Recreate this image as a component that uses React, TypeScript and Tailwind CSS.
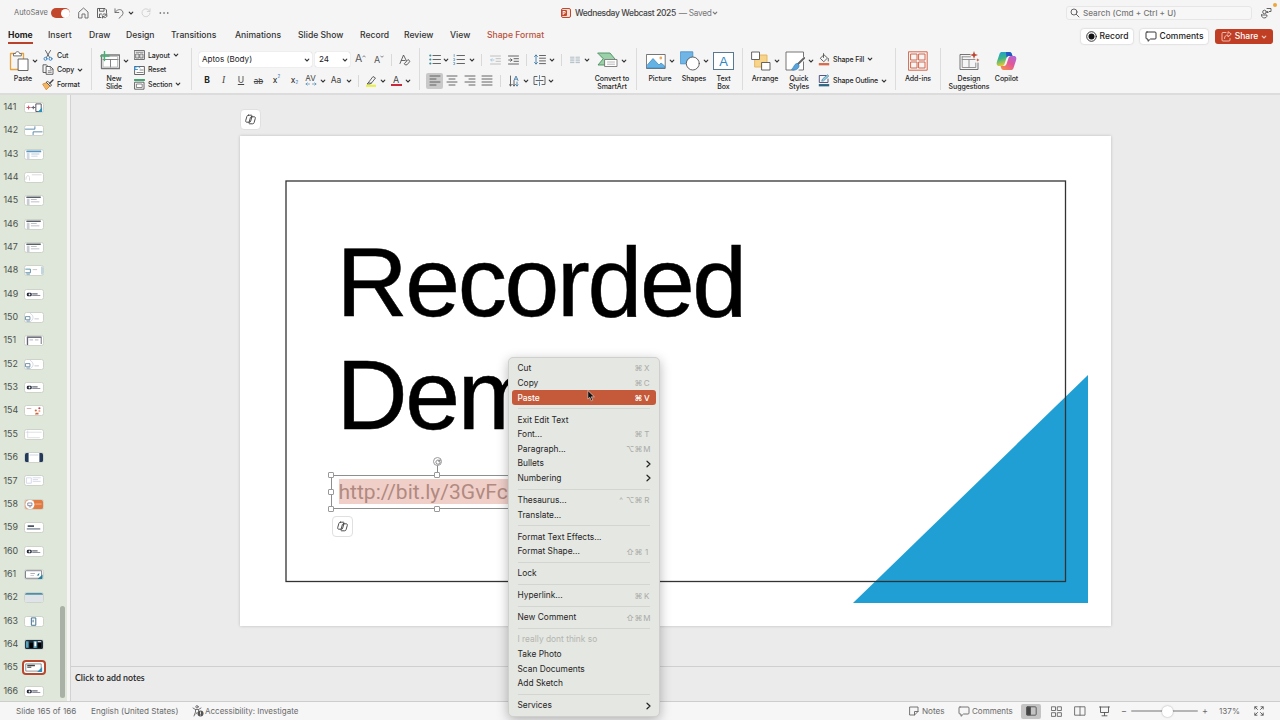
import React, { type ReactNode } from "react";

type Kids = { children?: ReactNode };

function Svg({ w, h, vb, children }: Kids & { w: number; h: number; vb?: string }) {
  return (
    <svg
      width={w}
      height={h}
      viewBox={vb ?? `0 0 ${w} ${h}`}
      fill="none"
      stroke="#555"
      strokeWidth={0.9}
      strokeLinecap="round"
      strokeLinejoin="round"
      className="block shrink-0"
    >
      {children}
    </svg>
  );
}

function Chev({ color = "#333" }: { color?: string }) {
  return (
    <Svg w={6} h={6}>
      <path d="M1.2 2.2L3 4L4.8 2.2" stroke={color} strokeWidth={1.1} />
    </Svg>
  );
}

function Cell({ w, children }: Kids & { w: string }) {
  return <div className={`flex shrink-0 items-center justify-center ${w}`}>{children}</div>;
}

function VLine() {
  return <div className="h-[12px] w-px bg-[#d9d9d9]" />;
}

function GroupLine() {
  return <div className="mt-[2px] h-[42px] w-px shrink-0 bg-[#dcdcdc]" />;
}

function Big({ w, icon, lines, chev }: { w: string; icon: ReactNode; lines: string[]; chev?: boolean }) {
  return (
    <div className={`flex shrink-0 flex-col items-center pt-[5px] ${w}`}>
      <div className="flex h-[20px] items-center gap-[3px]">
        {icon}
        {chev && <Chev />}
      </div>
      <div className="mt-[3.500px] text-center text-[7px] leading-[8px] font-medium tracking-[-0.01em] whitespace-nowrap text-[#262626]">
        {lines.map((l) => (
          <div key={l}>{l}</div>
        ))}
      </div>
    </div>
  );
}

function Small({ icon, label, chev }: { icon: ReactNode; label: string; chev?: boolean }) {
  return (
    <div className="flex h-[14.6px] items-center">
      <div className="flex w-[12px] justify-center">{icon}</div>
      <span className="ml-[3px] text-[7px] leading-none font-medium tracking-[-0.02em] whitespace-nowrap text-[#262626]">{label}</span>
      {chev && (
        <span className="ml-[3px]">
          <Chev />
        </span>
      )}
    </div>
  );
}

/* ---------- ribbon icons ---------- */

const PasteIcon = () => (
  <Svg w={20} h={20}>
    <path d="M6 2.5H1.5V18.500H9" stroke="#e8a33d" strokeWidth={1.3} />
    <path d="M12 2.5H14.500V8" stroke="#e8a33d" strokeWidth={1.3} />
    <path d="M4.500 4.500V2.500H6.500C6.500 0 10.500 0 10.500 2.500H12.300V4.500Z" fill="#fff" strokeWidth={0.8} />
    <rect x="9.500" y="8" width="9.500" height="11.500" fill="#fff" stroke="#555" />
  </Svg>
);
const CutIcon = () => (
  <Svg w={10} h={11}>
    <path d="M2.500 0.500L6.600 7.500M7.500 0.500L3.400 7.500" strokeWidth={0.9} />
    <circle cx="2.500" cy="8.800" r="1.500" stroke="#2f7fc0" />
    <circle cx="7.500" cy="8.800" r="1.500" stroke="#2f7fc0" />
  </Svg>
);
const CopyIcon = () => (
  <Svg w={12} h={11}>
    <path d="M4 8.500H1V0.800H4.500L5.500 2" />
    <path d="M4.500 2.500H8.500L11 5V10.300H4.500Z" fill="#fff" />
    <path d="M8.300 2.700V5.200H10.800M6.200 6.800H9.300M6.200 8.400H9.300" strokeWidth={0.7} />
  </Svg>
);
const FormatIcon = () => (
  <Svg w={12} h={11}>
    <path d="M1 5L5 3.500L8 7L4.500 10.500Z" fill="#f3b562" stroke="#d98b2b" />
    <path d="M4.500 3.500L8.500 7.300L9.500 6L6 2.500Z" fill="#fff" stroke="#444" />
    <path d="M7.800 4.200L11 1" stroke="#444" strokeWidth={1.400} />
  </Svg>
);
const NewSlideIcon = () => (
  <Svg w={20} h={20}>
    <rect x="1.500" y="4" width="18" height="13.500" fill="#fff" stroke="#777" strokeWidth={1.300} />
    <path d="M3 8.500H18M10.500 8.500V16" stroke="#777" />
    <rect x="3.500" y="5.500" width="14" height="10.500" stroke="#999" strokeWidth={0.600} />
    <path d="M4.500 0.500V9.500M0.500 5H9" stroke="#43b373" strokeWidth={1.400} />
  </Svg>
);
const LayoutIcon = () => (
  <Svg w={11} h={10}>
    <rect x="0.600" y="0.600" width="9.800" height="8.800" fill="#fff" />
    <path d="M2 2.300H9M2 4H5V8H2ZM6.200 4H9V8H6.200Z" strokeWidth={0.7} fill="#ddd" />
  </Svg>
);
const ResetIcon = () => (
  <Svg w={11} h={10}>
    <rect x="1" y="1.500" width="9.400" height="8" fill="#fff" />
    <path d="M3 7.500H9M6 5H9" strokeWidth={0.700} />
    <path d="M0.500 1.500V4.500H3.500M0.700 4.200C1.500 1 5 0.800 6 3" stroke="#2f8fd0" />
  </Svg>
);
const SectionIcon = () => (
  <Svg w={11} h={11}>
    <path d="M0.600 1H10.400" stroke="#43a373" strokeWidth={1.800} />
    <rect x="1" y="3.200" width="9" height="7" fill="#fff" />
    <rect x="2.800" y="5" width="5.400" height="3.500" strokeWidth={0.700} />
  </Svg>
);
function Lines({ xs, color = "#555" }: { xs: [number, number][]; color?: string }) {
  return (
    <Svg w={12} h={11}>
      {xs.map(([a, b], i) => (
        <path key={i} d={`M${a} ${1 + i * 3}H${b}`} stroke={color} />
      ))}
    </Svg>
  );
}
const BulletsIcon = ({ num }: { num?: boolean }) => (
  <Svg w={12} h={11}>
    <path d="M4 1.500H11.500M4 5.500H11.500M4 9.500H11.500" />
    {num ? (
      <path d="M1.200 0.500V2.500M0.700 4.600H1.700V5.500L0.700 6.500H1.700M0.700 8.500H1.700V10.500H0.700" stroke="#4a8bb5" strokeWidth={0.700} />
    ) : (
      <path d="M1.200 1.500H1.400M1.200 5.500H1.400M1.200 9.500H1.400" stroke="#3a8f9d" strokeWidth={2} />
    )}
  </Svg>
);
const IndentIcon = ({ dim }: { dim?: boolean }) => (
  <Svg w={11} h={10}>
    <path d="M0.500 1H10.500M6 3.700H10.500M6 6.300H10.500M0.500 9H10.500" stroke={dim ? "#bbb" : "#555"} />
    {dim ? <path d="M4 5H0.700M2 3.700L0.700 5L2 6.300" stroke="#a9c6dc" /> : <path d="M0.700 5H4M2.700 3.700L4 5L2.700 6.300" />}
  </Svg>
);
const SpacingIcon = () => (
  <Svg w={12} h={11}>
    <path d="M5.500 1.500H11.500M5.500 4.200H11.500M5.500 6.900H11.500M5.500 9.600H11.500" />
    <path d="M2 1V10M0.500 2.500L2 1L3.500 2.500M0.500 8.500L2 10L3.500 8.500" stroke="#3b78a8" />
  </Svg>
);
const ColumnsIcon = () => (
  <Svg w={10} h={8}>
    <path d="M0.500 1.200H4M0.500 3H4M0.500 4.800H4M0.500 6.600H4M6 1.200H9.500M6 3H9.500M6 4.800H9.500M6 6.600H9.500" stroke="#a8b8c2" />
  </Svg>
);
const DirectionIcon = () => (
  <Svg w={11} h={12}>
    <path d="M1.500 1V11M0.300 9.500L1.500 11L2.700 9.500M5 6V11M3.800 9.500L5 11L6.200 9.500" />
    <path d="M5 5.500L7 1L9 5.500M5.700 4.200H8.300M8 7V11M6.900 9.800L8 11L9.100 9.800" stroke="#4a7fa8" />
  </Svg>
);
const AlignTextIcon = () => (
  <Svg w={13} h={11}>
    <path d="M4 1.500H1V9.500H4M9 1.500H12V9.500H9M3 5.500H10" />
    <path d="M6.500 0.500V4M6.500 7V10.500" stroke="#4a7fa8" />
  </Svg>
);
const SmartArtIcon = () => (
  <Svg w={21} h={18}>
    <path d="M1 1H13L18 7L13 13H1L6 7Z" fill="#9ad1a9" stroke="#4c8f60" />
    <rect x="8" y="7.500" width="12" height="7" fill="#fff" stroke="#777" />
    <path d="M10.500 10H17.500M10.500 12.200H17.500" stroke="#999" strokeWidth={0.700} />
  </Svg>
);
const PictureIcon = () => (
  <Svg w={20} h={17}>
    <rect x="0.800" y="1.500" width="18.400" height="14" fill="#fff" stroke="#666" />
    <path d="M1.300 12L7 5.500L13 12L15 10L18.700 13V15H1.300Z" fill="#64b1e4" stroke="#3b82b8" strokeWidth={0.700} />
    <circle cx="14.800" cy="5" r="1.400" fill="#f0a95c" stroke="none" />
  </Svg>
);
const ShapesIcon = () => (
  <Svg w={20} h={20}>
    <rect x="0.800" y="0.800" width="12" height="12" fill="#6fb5e6" stroke="#4a93c8" />
    <circle cx="12.800" cy="12.500" r="6.500" fill="#fff" stroke="#555" />
  </Svg>
);
const TextBoxIcon = () => (
  <div className="flex h-[18px] w-[21px] items-center justify-center border border-[#557a92] bg-white font-['Liberation_Sans'] text-[13px] leading-none text-[#2f86c4]">
    A
  </div>
);
const ArrangeIcon = () => (
  <Svg w={20} h={20}>
    <rect x="4" y="4" width="12" height="12" fill="#f8d38a" stroke="#e3b25a" />
    <rect x="1" y="1" width="7.500" height="7.500" fill="#fff" />
    <rect x="11" y="11.500" width="8" height="7.500" fill="#fff" />
  </Svg>
);
const QuickIcon = () => (
  <Svg w={20} h={20}>
    <path d="M9 19H1V1H18.500V19H14" fill="#fff" stroke="#666" />
    <path d="M19 7.500L12.500 14" stroke="#fff" strokeWidth={3.500} />
    <path d="M19.200 7L12.500 13.500" stroke="#666" strokeWidth={2} />
    <path d="M12.500 12.500C9.500 12 9.500 15.500 6.500 18.500C10 20 14.500 18 14 14.500Z" fill="#58a3db" stroke="#3a7fb5" strokeWidth={0.700} />
  </Svg>
);
const FillIcon = () => (
  <Svg w={12} h={13}>
    <path d="M2.500 5L6 1.800L9.500 5L6 8.500ZM5.500 0.600V4.500M10.300 5.500V8" />
    <path d="M0.800 11.200H11.200" stroke="#d9694a" strokeWidth={2.300} strokeLinecap="butt" />
  </Svg>
);
const OutlineIcon = () => (
  <Svg w={12} h={13}>
    <path d="M8 1.500H1.300V8.500H10V5" stroke="#447" />
    <path d="M3.800 6.800L4.500 5L9.500 0.800L10.800 2L6 6.500Z" fill="#9cd" stroke="#3a7fa5" strokeWidth={0.700} />
    <path d="M0.800 11.200H11.200" stroke="#2d6580" strokeWidth={2.300} strokeLinecap="butt" />
  </Svg>
);
const AddInsIcon = () => (
  <Svg w={20} h={20}>
    <rect x="0.800" y="0.800" width="18.400" height="18.400" stroke="#d4674c" strokeWidth={1} />
    <path d="M3 3H9V9H3ZM11 3H17V9H11ZM3 11H9V17H3ZM11 11H17V17H11Z" stroke="#d4674c" strokeWidth={1} />
  </Svg>
);
const DesignIcon = () => (
  <Svg w={21} h={20}>
    <path d="M11 3.500H1V18.500H19V12" stroke="#666" />
    <path d="M3.200 5.800H11.500M3.200 8.500H16M10 8.500V16.500M3.200 5.800V16.500H16.800V12" stroke="#888" />
    <path d="M15 0L16 3L19 4L16 5L15 8L14 5L11 4L14 3ZM18.800 7.300L19.300 8.500L20.500 9L19.300 9.500L18.800 10.700L18.300 9.500L17.100 9L18.300 8.500Z" fill="#bd4430" stroke="none" />
  </Svg>
);
const CopilotIcon = () => (
  <Svg w={21} h={20} vb="0 0 21 20">
    <defs>
      <linearGradient id="cpA" x1="0" y1="0" x2="0.300" y2="1">
        <stop offset="0" stopColor="#1d9bd8" />
        <stop offset="0.500" stopColor="#3ab58a" />
        <stop offset="1" stopColor="#e8c930" />
      </linearGradient>
      <linearGradient id="cpB" x1="1" y1="0" x2="0.200" y2="1">
        <stop offset="0" stopColor="#a66be0" />
        <stop offset="0.500" stopColor="#e2559c" />
        <stop offset="1" stopColor="#f58a4c" />
      </linearGradient>
    </defs>
    <path d="M6 1H13.500C15 1 15.600 2 16 3.500L16.500 5H13C11.500 5 10.800 6 10.300 7.500L8.500 13C8 14.500 7 15 5.500 15H3C0.500 15 0.300 12.500 1 10.500L3.500 3C4 1.600 4.800 1 6 1Z" fill="url(#cpA)" stroke="none" />
    <path d="M15 19H7.500C6 19 5.400 18 5 16.500L4.600 15H8C9.500 15 10.200 14 10.700 12.500L12.500 7C13 5.500 14 5 15.500 5H18C20.500 5 20.700 7.500 20 9.500L17.500 17C17 18.400 16.200 19 15 19Z" fill="url(#cpB)" stroke="none" />
    <path d="M10 1H13.500C15 1 15.600 2 16 3.500L16.500 5H13C11.800 5 11 5.600 10.500 6.800Z" fill="#2458c5" stroke="none" />
  </Svg>
);
const CopilotOutline = () => (
  <Svg w={11} h={11}>
    <g stroke="#3c3c3c" strokeWidth={0.9}>
      <path d="M3.400 1.200H6.200C7 1.200 7.200 1.700 7 2.400L5.700 7.100C5.500 7.900 5.100 8.200 4.400 8.200H1.900C0.800 8.200 0.500 7.500 0.700 6.600L1.900 2.400C2.100 1.600 2.600 1.200 3.400 1.200Z" />
      <path d="M6.600 2.800H9.100C10.200 2.800 10.500 3.500 10.300 4.400L9.100 8.600C8.900 9.400 8.400 9.800 7.600 9.800H4.800C4 9.800 3.800 9.300 4 8.600L5.300 3.900C5.500 3.100 5.900 2.800 6.600 2.800Z" />
    </g>
  </Svg>
);
const CommentIcon = ({ color = "#444" }: { color?: string }) => (
  <Svg w={12} h={11}>
    <path d="M2 1H10C10.700 1 11 1.400 11 2V7C11 7.700 10.700 8 10 8H5.500L3 10.300V8H2C1.300 8 1 7.700 1 7V2C1 1.400 1.300 1 2 1Z" stroke={color} />
  </Svg>
);

/* ---------- top bars ---------- */

function TitleBar() {
  return (
    <div className="flex h-[26px] shrink-0 items-center">
      <div className="flex w-[561px] items-center pl-[14px]">
        <span className="w-[37px] text-[7.500px] whitespace-nowrap text-[#6b6b6b]">AutoSave</span>
        <div className="flex h-[10px] w-[19px] items-center justify-end rounded-full bg-[#c1482c] px-[0.500px]">
          <div className="size-[9px] rounded-full bg-white" />
        </div>
        <Cell w="w-[26px]">
          <Svg w={11} h={12}>
            <path d="M1 5L5.500 1L10 5V11H7V7H4V11H1Z" stroke="#666" />
          </Svg>
        </Cell>
        <Cell w="w-[11px]">
          <Svg w={12} h={12}>
            <path d="M5 10.500H1.500V1.500H9L10.500 3V5.500M3.500 1.500V4.200H8V1.500M3.500 10.500V7H5.500" stroke="#555" />
            <path d="M6.300 8.300C6.800 6.500 9.500 6.300 10.500 8M10.700 6.500V8.200H9M11 9C10.500 11 8 11.300 6.700 9.500M6.500 11V9.400H8.200" stroke="#555" />
          </Svg>
        </Cell>
        <Cell w="w-[23px]">
          <Svg w={10} h={11}>
            <path d="M1 0.800V4.500H4.800M1.200 4.300C3 1.500 6 0.800 8 2.500C9.800 4.500 9 6.500 7.500 8L5 10.300" stroke="#666" />
          </Svg>
        </Cell>
        <Cell w="w-[2px]">
          <Chev />
        </Cell>
        <Cell w="w-[27px]">
          <Svg w={10} h={10}>
            <path d="M8.800 3.500A4 4 0 1 0 9 5M9 0.800V3.500H6.300" stroke="#cfcfcf" />
          </Svg>
        </Cell>
        <Cell w="w-[9px]">
          <Svg w={10} h={4}>
            <path d="M1.300 2H1.400M5 2H5.100M8.700 2H8.800" stroke="#555" strokeWidth={1.600} />
          </Svg>
        </Cell>
      </div>
      <div className="flex w-[505px] items-center">
        <div className="relative h-[10px] w-[10px] rounded-[2px] border border-[#c1482c] bg-[#f7dfd8]">
          <div className="absolute top-[1px] -left-[1px] flex size-[6px] items-center justify-center rounded-[1px] bg-[#c1482c] text-[5px] leading-none font-bold text-white">P</div>
        </div>
        <span className="ml-[4px] text-[8.500px] font-medium tracking-[-0.045em] whitespace-nowrap text-[#444]">Wednesday Webcast 2025</span>
        <span className="ml-[3px] text-[8.300px] tracking-[-0.04em] whitespace-nowrap text-[#777]">— Saved</span>
        <span className="ml-[1px]">
          <Chev color="#777" />
        </span>
      </div>
      <div className="flex h-[14px] w-[186px] items-center rounded-[3px] border border-[#e6e6e6] bg-[#f7f7f7] pl-[3px]">
        <Svg w={10} h={10}>
          <circle cx="4" cy="4" r="3" stroke="#555" />
          <path d="M6.300 6.300L9 9" stroke="#555" />
        </Svg>
        <span className="ml-[3px] text-[8.150px] font-medium whitespace-nowrap text-[#777]">Search (Cmd + Ctrl + U)</span>
      </div>
      <div className="relative ml-[8px]">
        <Svg w={12} h={12}>
          <circle cx="4.500" cy="5" r="1.800" />
          <path d="M1.500 8H7C7.500 12 1 12 1.500 8ZM7 1.500H11V4.500H9L7.500 6V4.500" />
        </Svg>
        <div className="absolute -top-[4px] left-[13px] size-[4px] rounded-full bg-[#eda63c]" />
      </div>
    </div>
  );
}

const TABS: [string, string][] = [
  ["Insert", "w-[41px]"],
  ["Draw", "w-[37px]"],
  ["Design", "w-[45px]"],
  ["Transitions", "w-[64px]"],
  ["Animations", "w-[63px]"],
  ["Slide Show", "w-[62px]"],
  ["Record", "w-[44px]"],
  ["Review", "w-[46px]"],
  ["View", "w-[37px]"],
];

function TabBar() {
  return (
    <div className="flex h-[20px] shrink-0 pl-[8px] text-[8.600px] leading-[17px] font-medium whitespace-nowrap text-[#333]">
      <div className="w-[40px] pt-[1px]">
        <div className="w-[25px] font-bold text-[#1c1c1c]">Home</div>
        <div className="-mt-[2px] h-[2px] w-[25px] bg-[#b9432a]" />
      </div>
      {TABS.map(([t, w]) => (
        <div key={t} className={`pt-[1px] ${w}`}>
          {t}
        </div>
      ))}
      <div className="w-[594px] pt-[1px] text-[#b9503a]">Shape Format</div>
      <div className="mt-[3px] flex h-[15px] text-[8.500px] leading-none text-[#222]">
        <div className="flex w-[52px] items-center justify-center gap-[3px] rounded-[3px] bg-white shadow-[0_0_2px_rgba(0,0,0,0.25)]">
          <Svg w={11} h={11}>
            <circle cx="5.500" cy="5.500" r="4.800" stroke="#222" />
            <circle cx="5.500" cy="5.500" r="3" fill="#111" stroke="none" />
          </Svg>
          Record
        </div>
        <div className="ml-[7px] flex w-[68px] items-center justify-center gap-[3px] rounded-[3px] bg-white shadow-[0_0_2px_rgba(0,0,0,0.25)]">
          <CommentIcon color="#222" />
          Comments
        </div>
        <div className="ml-[7px] flex w-[58px] items-center justify-center gap-[3px] rounded-[3px] bg-[#c03f24] text-white">
          <Svg w={11} h={11}>
            <path d="M5 1.500H2C1.300 1.500 1 1.800 1 2.500V9C1 9.700 1.300 10 2 10H8C8.700 10 9 9.700 9 9V7.500M3.500 7.500C3.500 5 5 4 7 4V6L10.300 3L7 0.700V2.500" stroke="#f6c9bf" />
          </Svg>
          Share
          <Chev color="#f6c9bf" />
        </div>
      </div>
    </div>
  );
}

function FontGroup() {
  return (
    <div className="flex w-[227px] shrink-0 flex-col pl-[7px]">
      <div className="mt-[6px] flex h-[15px] items-center">
        <div className="flex h-[15px] w-[113px] items-center justify-between rounded-[2px] bg-white pr-[2px] pl-[3px] text-[8.100px] text-[#222] shadow-[0_0_1px_rgba(0,0,0,0.3)]">
          Aptos (Body)
          <Chev />
        </div>
        <div className="ml-[3px] flex h-[15px] w-[35px] items-center justify-between rounded-[2px] bg-white pr-[2px] pl-[4px] text-[8.100px] text-[#222] shadow-[0_0_1px_rgba(0,0,0,0.3)]">
          24
          <Chev />
        </div>
        <Cell w="w-[21px]">
          <span className="text-[10.500px] leading-none text-[#555]">A</span>
          <Svg w={4} h={12}>
            <path d="M0.700 3L2 1.700L3.300 3" stroke="#667" strokeWidth={0.800} />
          </Svg>
        </Cell>
        <Cell w="w-[16px]">
          <span className="text-[9px] leading-none text-[#555]">A</span>
          <Svg w={4} h={12}>
            <path d="M0.700 2L2 3.300L3.300 2" stroke="#667" strokeWidth={0.800} />
          </Svg>
        </Cell>
        <Cell w="w-[9px]">
          <VLine />
        </Cell>
        <Cell w="w-[17px]">
          <Svg w={12} h={12}>
            <path d="M1 9.500L4.500 1L7.500 7M2.300 6.500H6" />
            <path d="M5.500 9.500L9 5.500L11 7.300L8 10.800H6.500Z" fill="#eee" />
          </Svg>
        </Cell>
      </div>
      <div className="mt-[5px] flex h-[17px] items-center text-[8.500px] leading-none text-[#444]">
        <Cell w="w-[16px]">
          <b className="text-[#222]">B</b>
        </Cell>
        <Cell w="w-[17px]">
          <i className="font-['Liberation_Serif'] text-[9.500px]">I</i>
        </Cell>
        <Cell w="w-[18px]">
          <span className="underline underline-offset-1">U</span>
        </Cell>
        <Cell w="w-[17px]">
          <span className="text-[8px] line-through">ab</span>
        </Cell>
        <Cell w="w-[19px]">
          <span className="text-[#222]">x</span>
          <span className="-mt-[6px] text-[4.500px] text-[#3b78a8]">2</span>
        </Cell>
        <Cell w="w-[17px]">
          <span className="text-[#222]">x</span>
          <span className="mt-[6px] text-[4.500px] text-[#3b78a8]">2</span>
        </Cell>
        <Cell w="w-[15px]">
          <div className="flex flex-col items-center">
            <span className="text-[8px] leading-[7px]">AV</span>
            <Svg w={12} h={4}>
              <path d="M1 2H4.500M2.200 0.800L1 2L2.200 3.200M11 2H7.500M9.800 0.800L11 2L9.800 3.200" stroke="#4a8bb5" strokeWidth={0.700} />
            </Svg>
          </div>
        </Cell>
        <Cell w="w-[9px]">
          <Chev />
        </Cell>
        <Cell w="w-[18px]">Aa</Cell>
        <Cell w="w-[7px]">
          <Chev />
        </Cell>
        <Cell w="w-[12px]">
          <VLine />
        </Cell>
        <Cell w="w-[14px]">
          <Svg w={12} h={12}>
            <path d="M3.500 7.500L8 1.500L10.500 3L6.500 8ZM3.500 7.500L2 9H5L6.500 8" />
            <path d="M1 10.800H11" stroke="#eaf04a" strokeWidth={2.200} strokeLinecap="butt" />
          </Svg>
        </Cell>
        <Cell w="w-[10px]">
          <Chev />
        </Cell>
        <Cell w="w-[16px]">
          <div className="flex flex-col items-center">
            <span className="text-[9px] leading-[9px]">A</span>
            <div className="h-[2.500px] w-[11px] bg-[#c8283c]" />
          </div>
        </Cell>
        <Cell w="w-[8px]">
          <Chev />
        </Cell>
      </div>
    </div>
  );
}

function ParagraphGroup() {
  return (
    <div className="flex w-[168px] shrink-0 flex-col pl-[6px]">
      <div className="mt-[6px] flex h-[15px] items-center">
        <Cell w="w-[17px]"><BulletsIcon /></Cell>
        <Cell w="w-[6px]"><Chev /></Cell>
        <Cell w="w-[20px]"><BulletsIcon num /></Cell>
        <Cell w="w-[6px]"><Chev /></Cell>
        <Cell w="w-[13px]"><VLine /></Cell>
        <Cell w="w-[15px]"><IndentIcon dim /></Cell>
        <Cell w="w-[20px]"><IndentIcon /></Cell>
        <Cell w="w-[7px]"><VLine /></Cell>
        <Cell w="w-[19px]"><SpacingIcon /></Cell>
        <Cell w="w-[6px]"><Chev /></Cell>
        <Cell w="w-[12px]"><VLine /></Cell>
        <Cell w="w-[16px]"><ColumnsIcon /></Cell>
        <Cell w="w-[8px]"><Chev /></Cell>
      </div>
      <div className="mt-[6px] flex h-[15px] items-center">
        <div className="flex h-[16px] w-[17px] items-center justify-center rounded-[2px] bg-[#c9c9c9]">
          <Lines xs={[[1, 11], [1, 7], [1, 11], [1, 7]]} />
        </div>
        <Cell w="w-[18px]"><Lines xs={[[1, 11], [3, 9], [1, 11], [3, 9]]} /></Cell>
        <Cell w="w-[17px]"><Lines xs={[[1, 11], [5, 11], [1, 11], [5, 11]]} /></Cell>
        <Cell w="w-[18px]"><Lines xs={[[1, 11], [1, 11], [1, 11], [1, 11]]} /></Cell>
        <Cell w="w-[9px]"><VLine /></Cell>
        <Cell w="w-[18px]"><DirectionIcon /></Cell>
        <Cell w="w-[6px]"><Chev /></Cell>
        <Cell w="w-[20px]"><AlignTextIcon /></Cell>
        <Cell w="w-[4px]"><Chev /></Cell>
      </div>
    </div>
  );
}

function Ribbon() {
  return (
    <div className="flex h-[49px] shrink-0 border-b-2 border-[#dcdcdc]">
      <Big w="w-[46px]" icon={<PasteIcon />} chev lines={["Paste"]} />
      <div className="-ml-[4px] flex w-[49px] shrink-0 flex-col pt-[2px]">
        <Small icon={<CutIcon />} label="Cut" />
        <Small icon={<CopyIcon />} label="Copy" chev />
        <Small icon={<FormatIcon />} label="Format" />
      </div>
      <GroupLine />
      <Big w="w-[41px] pl-[3px]" icon={<NewSlideIcon />} chev lines={["New", "Slide"]} />
      <div className="flex w-[58px] shrink-0 flex-col pt-[2px]">
        <Small icon={<LayoutIcon />} label="Layout" chev />
        <Small icon={<ResetIcon />} label="Reset" />
        <Small icon={<SectionIcon />} label="Section" chev />
      </div>
      <GroupLine />
      <FontGroup />
      <GroupLine />
      <ParagraphGroup />
      <Big w="w-[48px]" icon={<SmartArtIcon />} chev lines={["Convert to", "SmartArt"]} />
      <GroupLine />
      <Big w="w-[46px]" icon={<PictureIcon />} chev lines={["Picture"]} />
      <Big w="w-[22px]" icon={<ShapesIcon />} chev lines={["Shapes"]} />
      <Big w="w-[37px]" icon={<TextBoxIcon />} lines={["Text", "Box"]} />
      <GroupLine />
      <Big w="w-[44px]" icon={<ArrangeIcon />} chev lines={["Arrange"]} />
      <Big w="w-[24px]" icon={<QuickIcon />} chev lines={["Quick", "Styles"]} />
      <div className="flex w-[84px] shrink-0 flex-col gap-[7px] pt-[6px] pl-[7px]">
        <Small icon={<FillIcon />} label="Shape Fill" chev />
        <Small icon={<OutlineIcon />} label="Shape Outline" chev />
      </div>
      <GroupLine />
      <Big w="w-[44px]" icon={<AddInsIcon />} lines={["Add-ins"]} />
      <GroupLine />
      <Big w="w-[56px]" icon={<DesignIcon />} lines={["Design", "Suggestions"]} />
      <Big w="w-[19px]" icon={<CopilotIcon />} lines={["Copilot"]} />
    </div>
  );
}

/* ---------- slide list ---------- */

const THUMBS = [
  "dots", "boxes", "blueWin", "faint", "win", "win", "win", "screen", "logo", "circle", "table", "circle", "logo",
  "red", "frame", "navy", "grid", "orange", "text", "logo", "framed", "header", "phone", "dark", "current", "logo",
];

function ThumbArt({ kind }: { kind: string }) {
  switch (kind) {
    case "dots":
      return (
        <g stroke="none">
          <path d="M2.200 5H5.800M4 3.400V6.600" stroke="#d4566a" strokeWidth={1.200} />
          <path d="M7.500 5H11M9.200 3.700V6.300" stroke="#667" strokeWidth={1.200} />
          <path d="M12.500 1H18V9L16 9.500H12.500Z" fill="#fff" stroke="#334" />
          <path d="M19 5V10H14Z" fill="#2b8fb8" />
        </g>
      );
    case "boxes":
      return <path d="M0.500 3.500H11V0.800M9 10V6.500H19" stroke="#3b7599" />;
    case "blueWin":
      return (
        <g stroke="none">
          <path d="M1.500 0.500H18V2.500H1.500Z" fill="#5b98c0" />
          <path d="M2 3H5V10H2Z" fill="#cfd8e4" />
          <path d="M7 4H16V5H7ZM7 6.500H14V7.300H7Z" fill="#b9c9dd" />
        </g>
      );
    case "faint":
      return <path d="M1 7C1 3 4 1 5 5V8M8 2H18" stroke="#d0d0d4" />;
    case "win":
      return (
        <g stroke="none">
          <path d="M1.500 0.500H17.500V2.300H1.500Z" fill="#596066" />
          <path d="M2 3H5V10H2Z" fill="#c9ccd2" />
          <path d="M6.500 3.500H13V4.500H6.500ZM6.500 6H16V7H6.500Z" fill="#a5adb5" />
        </g>
      );
    case "screen":
      return (
        <g>
          <path d="M0.800 3.500H6V7.500H0.800M2 9H5" stroke="#3a7b96" />
          <path d="M9 4H13" stroke="#aaa" strokeWidth={0.700} />
          <path d="M18.900 1V9" stroke="#2b7fa8" strokeWidth={0.700} />
        </g>
      );
    case "logo":
      return (
        <g stroke="none">
          <rect x="2" y="3" width="5.500" height="4" rx="1.500" fill="#252a3a" />
          <path d="M8 3.500H14V5H8ZM8 5.500H17V6.500H8Z" fill="#6a6f7c" />
          <circle cx="5" cy="5" r="1" fill="#fff" />
        </g>
      );
    case "circle":
      return (
        <g>
          <path d="M6 0.500C10 3 10 7 6 9.500" stroke="#ccd" />
          <path d="M1 4H5.500V7.500H1ZM2 9H5" stroke="#5a7f9a" />
          <path d="M11 6.500H15" stroke="#99a" strokeWidth={0.600} />
        </g>
      );
    case "table":
      return (
        <g stroke="none">
          <path d="M2 0.500H18.500V2H2Z" fill="#445" />
          <path d="M2 2H3.500V10H2ZM17.500 2H18.500V9H17.500Z" fill="#667" />
          <path d="M5 3.500H9V5H5ZM11 3.500H15V5H11Z" fill="#c3c6d3" />
        </g>
      );
    case "red":
      return (
        <g stroke="none">
          <path d="M2 2.500H7V3.200H2Z" fill="#c99" />
          <circle cx="12" cy="5" r="1.200" fill="#d9643c" />
          <circle cx="16" cy="2.500" r="1.200" fill="#c04a50" />
          <path d="M11 9.500H15V7.500H12ZM15 6H17V5H15Z" fill="#d9643c" />
        </g>
      );
    case "frame":
      return <path d="M3 1V8.500M1 2.500H18M16 8.500H4" stroke="#cdd0d8" strokeWidth={0.700} />;
    case "navy":
      return (
        <g stroke="none">
          <path d="M0 0H4V10H0ZM16 0H20V10H16Z" fill="#22395a" />
          <path d="M5 1.500H15V3H5Z" fill="#dfe3ea" />
        </g>
      );
    case "grid":
      return <path d="M2 2H7V8H2ZM9 2H17M9 4H14M9 6H17" stroke="#cfd3e6" strokeWidth={0.900} />;
    case "orange":
      return (
        <g stroke="none">
          <path d="M9 0H20V10H9Z" fill="#e27a42" />
          <path d="M0 0H9V10H0Z" fill="#e9a27c" />
          <circle cx="5.500" cy="5" r="5" fill="#fff" />
          <path d="M3.500 3.300H7.700V6.200H3.500ZM4.700 7.600H6.500" stroke="#557" strokeWidth={0.700} />
          <path d="M12 4.500H18" stroke="#f3c3a5" />
        </g>
      );
    case "text":
      return (
        <g stroke="none">
          <path d="M3 2.500H10V4.500H3Z" fill="#4a5468" />
          <path d="M2 5.500H17V7.500H2Z" fill="#9aa2ae" />
        </g>
      );
    case "framed":
      return (
        <g stroke="none">
          <path d="M1 0.800H18.500V9.200H1Z" stroke="#667" fill="#fff" />
          <path d="M6 3.500H11V4.500H6ZM6 5.500H10V6.200H6Z" fill="#99a" />
          <path d="M13 6L16 3L15.500 6ZM19.500 5V10H14Z" fill="#25809e" />
        </g>
      );
    case "header":
      return (
        <g stroke="none">
          <path d="M0 0H20V10H0Z" fill="#dfe4e8" />
          <path d="M0 0H20V2H0Z" fill="#4b8fa8" />
        </g>
      );
    case "phone":
      return <path d="M7.500 1H12V9.200H7.500ZM9 3.500V5.500" stroke="#40728f" strokeWidth={1.100} />;
    case "dark":
      return (
        <g stroke="none">
          <path d="M0 0H20V10H0Z" fill="#1a2c3c" />
          <path d="M1 1.500H4V8.500H1ZM9.500 1H13V9H9.500Z" fill="#5aa0b8" />
          <path d="M10.500 2H12.500V7H10.500ZM14 1.300H18V2.500H14Z" fill="#fff" />
          <path d="M5 3H9V9H5ZM14.500 3H18V8.500H14.500Z" fill="#000" />
        </g>
      );
    default:
      return (
        <g stroke="none">
          <path d="M1.300 1H18V9H1.300Z" stroke="#555" strokeWidth={0.700} fill="#fff" />
          <path d="M2.500 2H11V3.500H2.500ZM2.500 4.200H7V5.200H2.500Z" fill="#444" />
          <path d="M19 4.500V10H13.500Z" fill="#2b8fb8" />
        </g>
      );
  }
}

function Sidebar() {
  return (
    <div className="flex w-[71px] shrink-0 border-r border-[#d2d2d2] bg-[#f4f4f2]">
      <div className="flex w-[67px] bg-[#dfe6da]">
        <div className="w-[60px] pt-[0.800px]">
          {THUMBS.map((k, i) => (
            <div key={i} className="flex h-[23.350px] items-center pl-[3.500px]">
              <span className="w-[15px] text-[8.900px] leading-none whitespace-nowrap text-[#4c524a]">{141 + i}</span>
              <div
                className={
                  k === "current"
                    ? "ml-[3.500px] rounded-[4px] border-[2px] border-[#b5482f] bg-white p-[1px]"
                    : "ml-[5.500px] overflow-hidden rounded-[2.500px] border border-[#cdd3c9] bg-white"
                }
              >
                <Svg w={18} h={9} vb="0 0 20 10">
                  <ThumbArt kind={k} />
                </Svg>
              </div>
            </div>
          ))}
        </div>
        <div className="mt-auto mb-[3px] h-[92px] w-[5px] rounded-full bg-[#a9b0a6]" />
      </div>
    </div>
  );
}

/* ---------- context menu ---------- */

type Entry = { label: string; keys?: string[]; sub?: boolean; active?: boolean; off?: boolean } | null;

const MENU: Entry[] = [
  { label: "Cut", keys: ["⌘", "X"] },
  { label: "Copy", keys: ["⌘", "C"] },
  { label: "Paste", keys: ["⌘", "V"], active: true },
  null,
  { label: "Exit Edit Text" },
  { label: "Font...", keys: ["⌘", "T"] },
  { label: "Paragraph...", keys: ["⌥", "⌘", "M"] },
  { label: "Bullets", sub: true },
  { label: "Numbering", sub: true },
  null,
  { label: "Thesaurus...", keys: ["^", "⌥", "⌘", "R"] },
  { label: "Translate..." },
  null,
  { label: "Format Text Effects..." },
  { label: "Format Shape...", keys: ["⇧", "⌘", "1"] },
  null,
  { label: "Lock" },
  null,
  { label: "Hyperlink...", keys: ["⌘", "K"] },
  null,
  { label: "New Comment", keys: ["⇧", "⌘", "M"] },
  null,
  { label: "I really dont think so", off: true },
  { label: "Take Photo" },
  { label: "Scan Documents" },
  { label: "Add Sketch" },
  null,
  { label: "Services", sub: true },
];

function ContextMenu() {
  return (
    <div className="absolute top-[357px] left-[508px] h-[360px] w-[152px] rounded-[5px] border border-[#cfd0cd] bg-[#e5e7e2] px-[3px] pt-[3.100px] shadow-[0_3px_12px_rgba(0,0,0,0.28)]">
      {MENU.map((m, i) =>
        m === null ? (
          <div key={i} className="flex h-[7.330px] items-center px-[6px]">
            <div className="h-px w-full bg-[#d3d5d0]" />
          </div>
        ) : (
          <div
            key={i}
            className={`flex h-[14.670px] items-center justify-between rounded-[3px] px-[5.500px] text-[8.400px] leading-none whitespace-nowrap ${
              m.active ? "bg-[#c55a3a] font-medium text-white" : m.off ? "text-[#b3b5b0]" : "text-[#262626]"
            }`}
          >
            <span>{m.label}</span>
            {m.keys && (
              <span className={`flex gap-[1px] text-[8px] ${m.active ? "text-white" : "text-[#a9aba7]"}`}>
                {m.keys.map((k) => (
                  <span key={k} className="w-[7.500px] text-center font-['Inter','DejaVu_Sans',sans-serif]">
                    {k}
                  </span>
                ))}
              </span>
            )}
            {m.sub && (
              <Svg w={5} h={8}>
                <path d="M1 1.200L4 4L1 6.800" stroke="#222" strokeWidth={1.200} />
              </Svg>
            )}
          </div>
        ),
      )}
      <div className="absolute top-[32px] left-[78px]">
        <Svg w={8} h={12}>
          <path d="M0.800 0.800V9L2.800 7.300L4.300 10.800L5.800 10.200L4.300 6.800H7Z" fill="#111" stroke="#ddd" strokeWidth={0.600} />
        </Svg>
      </div>
    </div>
  );
}

/* ---------- slide canvas ---------- */

const HANDLES = [
  "-top-[4px] -left-[4px]",
  "top-[13px] -left-[4px]",
  "top-[30px] -left-[4px]",
  "-top-[4px] left-[102px]",
  "top-[30px] left-[102px]",
];

function Slide() {
  return (
    <div className="relative ml-[169px] h-[490px] w-[871px] bg-white shadow-[0_0_3px_rgba(0,0,0,0.2)]">
      <svg width="871" height="490" className="absolute inset-0">
        <path d="M848 239V467H613Z" fill="#209fd4" />
        <rect x="46" y="45" width="779.500" height="400.500" fill="none" stroke="#333" strokeWidth="1.300" />
      </svg>
      <div className="absolute top-[90px] left-[96.500px] font-['Liberation_Sans'] text-[98.500px] leading-[112.500px] tracking-[-2.350px] text-black [-webkit-text-stroke:0.5px_black]">
        Recorded
        <br />
        Demo
      </div>
      <div className="absolute top-[339px] left-[91px] h-[34px] w-[212px] border border-[#8b908e]">
        <div className="mt-[3px] ml-[6.500px] h-[25px] bg-[#f0cfc9] font-['Roboto'] text-[21px] leading-[26px] tracking-[0.02px] whitespace-nowrap text-[#b08a80]">
          http://bit.ly/3GvFc
        </div>
        <div className="absolute -top-[11px] left-[105px] h-[10px] w-px bg-[#888]" />
        <div className="absolute -top-[19px] left-[101px] flex size-[9px] items-center justify-center rounded-full border border-[#999] bg-white">
          <Svg w={6} h={6}>
            <path d="M4.800 2A2.100 2.100 0 1 0 5.100 3.500M5 0.800V2.200H3.600" stroke="#666" strokeWidth={0.800} />
          </Svg>
        </div>
        {HANDLES.map((h) => (
          <div key={h} className={`absolute size-[6px] rounded-[1px] border border-[#999] bg-white ${h}`} />
        ))}
      </div>
      <div className="absolute top-[380px] left-[92px] flex size-[21px] items-center justify-center rounded-[4px] border border-[#e0e0e0] bg-white">
        <CopilotOutline />
      </div>
    </div>
  );
}

/* ---------- status bar ---------- */

function StatusBar() {
  return (
    <div className="flex h-[19px] shrink-0 items-center border-t border-[#cdcdcd] bg-[#f6f6f6] pl-[16px] text-[8.150px] whitespace-nowrap text-[#6a6a6a]">
      <span className="w-[75px]">Slide 165 of 166</span>
      <span className="w-[101px]">English (United States)</span>
      <Svg w={12} h={12}>
        <circle cx="5" cy="1.800" r="1.200" stroke="#666" />
        <path d="M1 3L3.500 4.500V7L2 11M9 3L6.500 4.500V6M3.500 4.500H6.500M5 7.500L4 9" stroke="#666" />
        <circle cx="8.500" cy="8.500" r="3" fill="#555" stroke="none" />
        <path d="M8.500 7V8.700M8.500 10V10.100" stroke="#fff" strokeWidth={0.800} />
      </Svg>
      <span className="ml-[1px] w-[704px] text-[8px]">Accessibility: Investigate</span>
      <Svg w={10} h={10}>
        <path d="M1 1H9V5.500L5.500 9H1ZM9 5.500H5.500V9" stroke="#666" />
      </Svg>
      <span className="ml-[3px] w-[36px]">Notes</span>
      <CommentIcon color="#666" />
      <span className="ml-[2px] w-[49px] text-[8px]">Comments</span>
      <div className="flex h-[15px] w-[20px] items-center justify-center rounded-[2px] bg-[#c4c4c4]">
        <Svg w={11} h={10}>
          <rect x="0.800" y="0.800" width="9.400" height="8.400" rx="1" />
          <path d="M1 1H4.500V9H1Z" fill="#444" />
        </Svg>
      </div>
      <Cell w="w-[30px]">
        <Svg w={11} h={11}>
          <path d="M0.800 0.800H4.500V4.500H0.800ZM6.700 0.800H10.400V4.500H6.700ZM0.800 6.700H4.500V10.400H0.800ZM6.700 6.700H10.400V10.400H6.700Z" stroke="#666" />
        </Svg>
      </Cell>
      <Cell w="w-[18px]">
        <Svg w={12} h={10}>
          <path d="M1 0.800H11V9.200H1ZM6 0.800V9.200" stroke="#666" />
        </Svg>
      </Cell>
      <Cell w="w-[30px]">
        <Svg w={11} h={11}>
          <path d="M0.500 1H10.500M1.500 1V6.500H9.500V1M5.500 6.500V9.500M3 9.800H8" stroke="#555" />
        </Svg>
      </Cell>
      <span className="-ml-[1px] w-[12px] text-center text-[9px]">−</span>
      <div className="relative ml-[1px] h-[2px] w-[67px] rounded bg-[#b5b5b5]">
        <div className="absolute -top-[4.500px] left-[31px] size-[11px] rounded-full bg-white shadow-[0_0_2px_rgba(0,0,0,0.35)]" />
      </div>
      <span className="w-[14px] text-center text-[9px]">+</span>
      <span className="ml-[7px] w-[35px]">137%</span>
      <Svg w={10} h={10}>
        <path d="M0.800 3V0.800H3M1 1L3.500 3.500M9.200 3V0.800H7M9 1L6.500 3.500M0.800 7V9.200H3M1 9L3.500 6.500M9.200 7V9.200H7M9 9L6.500 6.500" stroke="#555" />
      </Svg>
    </div>
  );
}

export default function App() {
  return (
    <div className="relative flex h-[720px] w-[1280px] flex-col overflow-hidden bg-[#f5f5f5] font-['Inter','Liberation_Sans',sans-serif]">
      <TitleBar />
      <TabBar />
      <Ribbon />
      <div className="flex h-[606px] shrink-0">
        <Sidebar />
        <div className="flex min-w-0 grow flex-col bg-[#ebebeb]">
          <div className="h-[572px] shrink-0 border-b border-[#cfcfcf]">
            <div className="flex h-[41px] items-center pt-[8px] pl-[169px]">
              <div className="flex size-[21px] items-center justify-center rounded-[4px] border border-[#e0e0e0] bg-white">
                <CopilotOutline />
              </div>
            </div>
            <Slide />
          </div>
          <div className="px-[4px] pt-[4px] font-['Lato'] text-[8.800px] leading-[14px] font-semibold text-[#1c1c1c]">Click to add notes</div>
        </div>
      </div>
      <StatusBar />
      <ContextMenu />
    </div>
  );
}
